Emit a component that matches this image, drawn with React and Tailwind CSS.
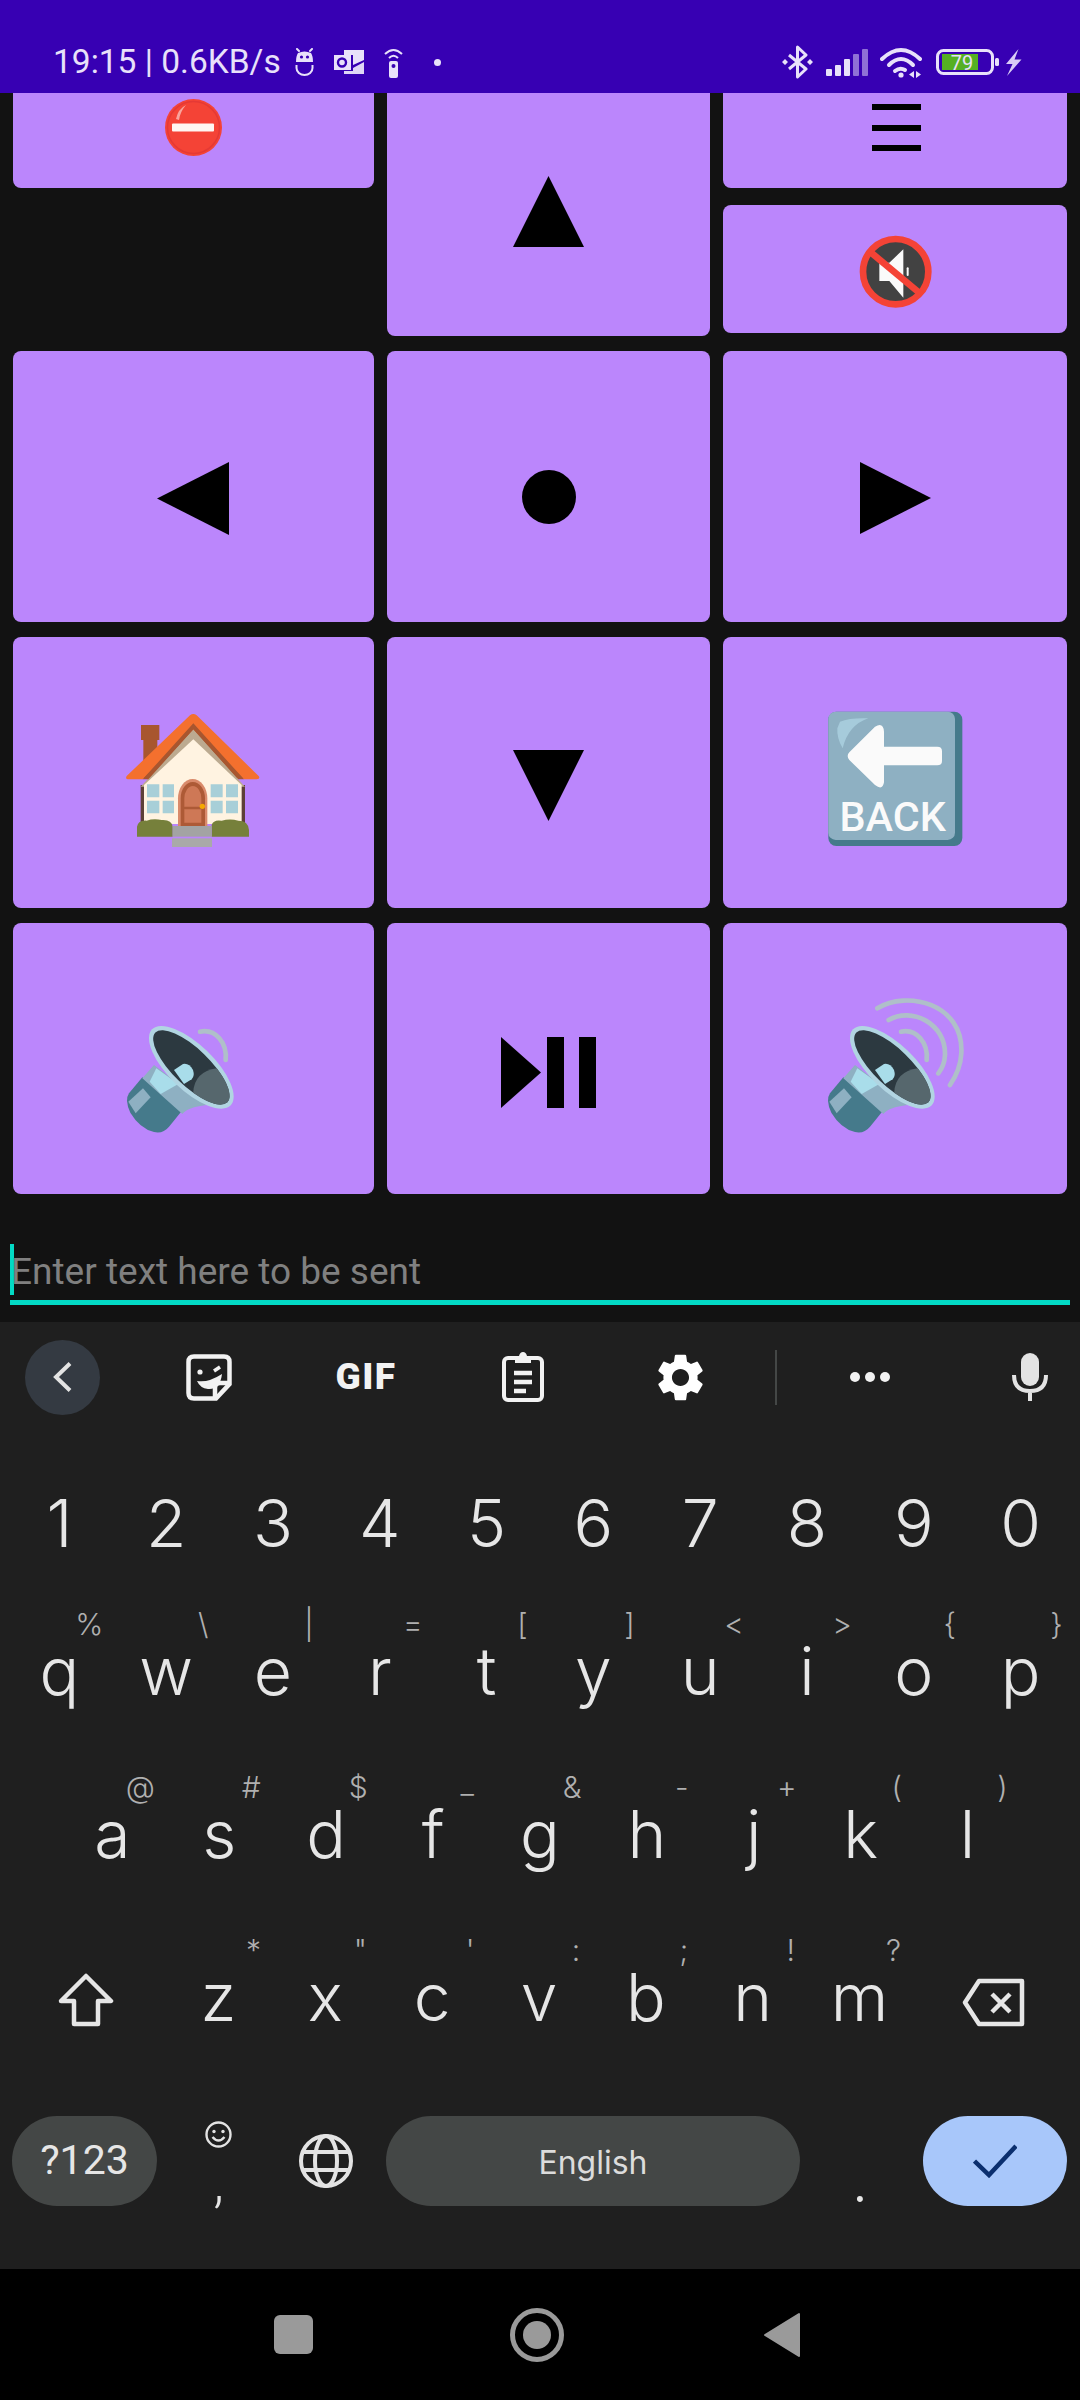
import React from 'react';

const BTN = 'flex items-center justify-center rounded-[8px] bg-[#bb86fc] overflow-hidden';
const INK = '#e8e1fa';

function Robot() {
  return (
    <svg width="19" height="28" viewBox="0 0 19 28" fill="none" stroke={INK} strokeWidth="2">
      <path d="M2 1l2 2M17 1l-2 2" strokeLinecap="round" />
      <path d="M3 5Q9.5 2 16 5Q18 8 18 14H1Q1 8 3 5Z" fill={INK} stroke="none" />
      <circle cx="6.5" cy="9" r="1.6" fill="#3700b3" stroke="none" />
      <circle cx="12.5" cy="9" r="1.6" fill="#3700b3" stroke="none" />
      <path d="M1.5 17v3a8 7 0 0 0 16 0v-3" />
    </svg>
  );
}
function Outlook() {
  return (
    <svg width="30" height="24" viewBox="0 0 30 24" fill={INK}>
      <path d="M10 0H30V10L19 15V5H10Z" />
      <path d="M19 18L30 12V24H10V21H19Z" opacity=".95" />
      <rect x="0" y="5" width="17" height="15" />
      <circle cx="8" cy="12.5" r="4" fill="none" stroke="#3700b3" strokeWidth="2.4" />
    </svg>
  );
}
function Remote() {
  return (
    <svg width="19" height="31" viewBox="0 0 19 31" fill="none" stroke={INK} strokeWidth="2">
      <path d="M1 7Q9.5 -1 18 7M5 11Q9.5 6.5 14 11" />
      <rect x="5" y="14" width="9" height="17" rx="2" fill={INK} stroke="none" />
      <circle cx="9.5" cy="19" r="2" fill="#3700b3" stroke="none" />
    </svg>
  );
}
function Bluetooth() {
  return (
    <svg width="31" height="34" viewBox="0 0 31 34" fill="none" stroke={INK} strokeWidth="3">
      <path d="M7 10L24 24L15.5 32V2L24 10L7 24" strokeLinejoin="round" />
      <path d="M3 14l3 3l-3 3l-3-3ZM28 14l3 3l-3 3l-3-3Z" fill={INK} stroke="none" />
    </svg>
  );
}
function Signal() {
  return (
    <svg width="42" height="27" viewBox="0 0 42 27" fill={INK}>
      <rect x="0" y="20" width="6" height="7" rx="1" />
      <rect x="9" y="16" width="6" height="11" rx="1" />
      <rect x="18" y="10" width="6" height="17" rx="1" />
      <rect x="27" y="5" width="6" height="22" rx="1" opacity=".5" />
      <rect x="36" y="0" width="6" height="27" rx="1" opacity=".5" />
    </svg>
  );
}
function Wifi() {
  return (
    <svg width="42" height="31" viewBox="0 0 42 31" fill="none" stroke={INK} strokeWidth="4" strokeLinecap="round">
      <path d="M2 12Q21 -6 40 12" />
      <path d="M9 18Q21 6 33 18" />
      <path d="M15 24Q20 20 25 23" />
      <circle cx="21" cy="28" r="2.6" fill={INK} stroke="none" />
      <path d="M34 24v7l-5-3.5ZM36 24v7l5-3.5Z" fill={INK} stroke="none" />
    </svg>
  );
}
function Battery() {
  return (
    <svg width="63" height="26" viewBox="0 0 63 26" fill="none">
      <rect x="1.5" y="1.5" width="55" height="23" rx="6" stroke={INK} strokeWidth="3" />
      <rect x="6" y="5" width="36" height="16" fill="#55b023" />
      <text x="26" y="20.5" textAnchor="middle" fill={INK} className="font-[Roboto,sans-serif] text-[20px]">79</text>
      <rect x="59" y="9" width="4" height="8" rx="1.5" fill={INK} />
    </svg>
  );
}
function Bolt() {
  return (
    <svg width="17" height="27" viewBox="0 0 17 27" fill="#d9cbf6">
      <path d="M13.5 0L1 15H7.5L2 27L16.5 10.5H9.5Z" />
    </svg>
  );
}

function StatusBar() {
  return (
    <div className="h-[93px] pt-[31px] shrink-0 bg-[#3700b3] flex items-center justify-between pl-[53px] pr-[58px] text-[#e8e1fa] font-[Roboto,sans-serif]">
      <div className="flex items-center">
        <span className="w-[242px] text-[33.5px] leading-[40px] whitespace-nowrap">19:15 | 0.6KB/s</span>
        <Robot />
        <span className="ml-[20px] flex"><Outlook /></span>
        <span className="ml-[20px] flex"><Remote /></span>
        <span className="ml-[31px] w-[7px] h-[7px] rounded-full bg-[#e8e1fa]" />
      </div>
      <div className="flex items-center">
        <Bluetooth />
        <span className="ml-[13px] flex"><Signal /></span>
        <span className="ml-[12px] flex"><Wifi /></span>
        <span className="ml-[14px] flex"><Battery /></span>
        <span className="ml-[6px] flex"><Bolt /></span>
      </div>
    </div>
  );
}

function NoEntry() {
  return (
    <svg width="57" height="57" viewBox="0 0 57 57">
      <circle cx="28.5" cy="28.5" r="28.5" fill="#f44336" />
      <circle cx="28.5" cy="28.5" r="26" fill="#f44336" stroke="#e53935" strokeWidth="1.5" />
      <path d="M11 20Q13 10 21 6Q15 13 14 21Z" fill="#f9a49c" />
      <rect x="7" y="24.5" width="42" height="8" rx="1" fill="#fff6f2" />
    </svg>
  );
}
function Hamburger() {
  return (
    <svg width="49" height="47" viewBox="0 0 49 47" fill="#000">
      <rect y="0" width="49" height="6" />
      <rect y="21" width="49" height="6" />
      <rect y="41" width="49" height="6" />
    </svg>
  );
}
function Mute() {
  return (
    <svg width="90" height="90" viewBox="0 0 270 270">
      <circle cx="137" cy="137" r="98" fill="#424242" stroke="#f44336" strokeWidth="20" />
      <path d="M88 110H118L160 70V215L118 165H88Z" fill="#fafafa" />
      <rect x="170" y="124" width="6" height="26" rx="3" fill="#fafafa" />
      <path d="M66 82L205 198" stroke="#f44336" strokeWidth="20" />
    </svg>
  );
}
function House() {
  return (
    <svg width="207" height="180" viewBox="0 0 621 540">
      <rect x="153" y="105" width="55" height="45" fill="#a8562f" />
      <rect x="160" y="150" width="42" height="70" fill="#a8562f" />
      <rect x="152" y="285" width="313" height="115" fill="#5d4037" />
      <path d="M310 100L468 265H150Z" fill="#a8562f" />
      <path d="M310 118L465 290H152Z" fill="#bcaa90" />
      <path d="M310 148L455 285V402H162V285Z" fill="#fff3e1" />
      <path d="M300 76Q310 68 320 76L506 258Q512 268 500 268H462L310 118L158 268H118Q104 268 110 258Z" fill="#f4702e" />
      <path d="M310 100L462 268H445L310 118L175 268H158Z" fill="#a8562f" />
      <path d="M171 283H208V322H171ZM218 283H252V322H218ZM171 332H208V370H171ZM218 332H252V370H218ZM362 283H398V322H362ZM408 283H444V322H408ZM362 332H398V370H362ZM408 332H444V370H408Z" fill="#a8cfd8" />
      <path d="M264 408V325A44 58 0 0 1 352 325V408Z" fill="#d98a6b" />
      <path d="M272 408V325A36 48 0 0 1 345 325V408Z" fill="#ad5a36" />
      <path d="M283 350V325A25 36 0 0 1 334 325V350ZM283 358H334V398H283Z" fill="#ce7856" />
      <circle cx="337" cy="349" r="8" fill="#f5a800" />
      <path d="M141 440V410Q145 390 170 392Q190 385 215 390Q245 388 248 410V440ZM365 440V405Q370 388 395 392Q420 385 445 392Q475 392 477 420V440Z" fill="#76803b" />
      <rect x="248" y="408" width="117" height="32" fill="#a3a3a3" />
      <rect x="246" y="445" width="120" height="26" fill="#a9a9a9" />
    </svg>
  );
}
function BackKey() {
  return (
    <svg width="150" height="150" viewBox="0 0 450 450">
      <rect x="25" y="20" width="402" height="403" rx="24" fill="#457a8b" />
      <rect x="25" y="20" width="380" height="385" rx="22" fill="#8eb0c2" />
      <path d="M60 50Q90 38 145 40Q85 60 68 130Q50 100 52 70Z" fill="#a6cbdb" />
      <path d="M88 142L165 65Q190 50 192 80V125H352Q366 125 366 138V168Q366 181 352 181H192V232Q188 258 165 240L88 165Q78 153 88 142Z" fill="#fafafa" />
      <text x="218" y="378" textAnchor="middle" fill="#fafafa" className="font-[Roboto,sans-serif] text-[124px] font-medium">BACK</text>
    </svg>
  );
}
function Speaker({ loud }) {
  return (
    <svg width="150" height="150" viewBox="0 0 450 450" fill="none">
      <path d="M70 262L30 310Q16 330 34 368Q62 415 105 426Q132 432 150 410L195 355Z" fill="#457a8b" />
      <path d="M72 295L28 335L50 370L95 322Z" fill="#8eb0c2" />
      <path d="M105 225L70 265L190 372Q205 352 262 345Z" fill="#8eb0c2" />
      <path d="M112 235L92 275L125 312L178 282Z" fill="#a9ddea" />
      <g transform="rotate(44 217 232)">
        <ellipse cx="217" cy="232" rx="164" ry="68" fill="#b1d5e2" />
        <ellipse cx="217" cy="232" rx="150" ry="55" fill="#2c3940" />
        <path d="M274 181A150 55 0 0 1 274 283Q232 235 274 181Z" fill="#56676d" />
      </g>
      <path d="M165 240L192 222Q210 218 222 240Q228 258 218 268L195 282Z" fill="#a9ddea" />
      <g stroke="#afbfc9" strokeWidth="14" strokeLinecap="round">
        <path d="M243 125C290 115 325 160 320 210" />
        {loud && <path d="M206 90C275 50 378 100 375 195C374 215 367 235 355 250" />}
        {loud && <path d="M172 55C260 0 432 40 424 190C422 230 407 260 390 285" />}
      </g>
    </svg>
  );
}

function Tri({ pts, w, h, box }) {
  return (
    <svg width={w} height={h} viewBox={box}>
      <polygon points={pts} fill="#000" />
    </svg>
  );
}

function ButtonGrid() {
  return (
    <div className="h-[1101px] shrink-0 px-[13px] flex flex-col gap-[15px]">
      <div className="grid grid-cols-[361px_323px_344px] gap-x-[13px] h-[243px]">
        <div className={`${BTN} h-[95px] pb-[26px] rounded-t-none`}><NoEntry /></div>
        <div className={`${BTN} pb-[6px] rounded-t-none`}><Tri w={71} h={71} box="0 0 71 71" pts="35.5,0 71,71 0,71" /></div>
        <div className="flex flex-col gap-[17px]">
          <div className={`${BTN} h-[95px] pb-[26px] pl-[3px] rounded-t-none`}><Hamburger /></div>
          <div className={`${BTN} h-[128px] pt-[4px]`}><Mute /></div>
        </div>
      </div>
      <div className="grid grid-cols-[361px_323px_344px] gap-x-[13px] h-[271px]">
        <div className={`${BTN} pt-[23px] pr-[1px]`}><Tri w={72} h={73} box="0 0 72 73" pts="72,0 72,73 0,36.5" /></div>
        <div className={`${BTN} pt-[21px]`}><svg width="54" height="54" viewBox="0 0 54 54"><circle cx="27" cy="27" r="27" fill="#000" /></svg></div>
        <div className={`${BTN} pt-[23px]`}><Tri w={71} h={72} box="0 0 71 72" pts="0,0 71,36 0,72" /></div>
      </div>
      <div className="grid grid-cols-[361px_323px_344px] gap-x-[13px] h-[271px]">
        <div className={`${BTN} pt-[15px]`}><House /></div>
        <div className={`${BTN} pt-[26px]`}><Tri w={71} h={71} box="0 0 71 71" pts="0,0 71,0 35.5,71" /></div>
        <div className={`${BTN} pt-[15px]`}><BackKey /></div>
      </div>
      <div className="grid grid-cols-[361px_323px_344px] gap-x-[13px] h-[271px]">
        <div className={`${BTN} pt-[13px]`}><Speaker /></div>
        <div className={`${BTN} pt-[28px]`}>
          <svg width="95" height="71" viewBox="0 0 95 71" fill="#000">
            <polygon points="0,0 40,35.5 0,71" />
            <rect x="46" width="17" height="71" />
            <rect x="78" width="17" height="71" />
          </svg>
        </div>
        <div className={`${BTN} pt-[13px]`}><Speaker loud /></div>
      </div>
    </div>
  );
}

function InputField() {
  return (
    <div className="h-[128px] shrink-0 px-[10px] pt-[50px]">
      <div className="flex h-[51px]">
        <div className="w-[4px] h-full bg-[#03dac5]" />
        <span className="-ml-[3px] pt-[6px] text-[37px] leading-[44px] text-[#808080] font-[Roboto,sans-serif] whitespace-nowrap">Enter text here to be sent</span>
      </div>
      <div className="mt-[5px] h-[5px] bg-[#03dac5]" />
    </div>
  );
}

function Sticker() {
  return (
    <svg width="46" height="47" viewBox="0 0 46 47" fill="none" stroke="#f2f2f2" strokeWidth="4.5">
      <path d="M8 2.5H38Q43.5 2.5 43.5 8V30L30 44.5H8Q2.5 44.5 2.5 39V8Q2.5 2.5 8 2.5Z" />
      <path d="M43.5 29H34Q29 29 29 34V44.5" />
      <circle cx="14" cy="18" r="2.6" fill="#f2f2f2" stroke="none" />
      <path d="M28 17L34 13" strokeWidth="3.5" />
      <path d="M11 27Q22 29 36 20Q34 36 22 35Q14 34 11 27Z" fill="#f2f2f2" stroke="none" />
    </svg>
  );
}
function Clipboard() {
  return (
    <svg width="42" height="50" viewBox="0 0 42 50" fill="none" stroke="#f2f2f2" strokeWidth="4">
      <rect x="2" y="6" width="38" height="42" rx="4" />
      <path d="M13 4H17Q18 0 21 0Q24 0 25 4H29V11H13Z" fill="#f2f2f2" stroke="none" />
      <path d="M12 21H30M12 30H30M12 39H24" strokeWidth="4.5" />
    </svg>
  );
}
function Gear() {
  return (
    <svg width="57" height="57" viewBox="0 0 24 24" fill="#fff">
      <path d="M19.14 12.94c.04-.3.06-.61.06-.94 0-.32-.02-.64-.07-.94l2.03-1.58c.18-.14.23-.41.12-.61l-1.92-3.32c-.12-.22-.37-.29-.59-.22l-2.39.96c-.5-.38-1.03-.7-1.62-.94l-.36-2.54c-.04-.24-.24-.41-.48-.41h-3.84c-.24 0-.43.17-.47.41l-.36 2.54c-.59.24-1.13.57-1.62.94l-2.39-.96c-.22-.08-.47 0-.59.22L2.74 8.87c-.12.21-.08.47.12.61l2.03 1.58c-.05.3-.09.63-.09.94s.02.64.07.94l-2.03 1.58c-.18.14-.23.41-.12.61l1.92 3.32c.12.22.37.29.59.22l2.39-.96c.5.38 1.03.7 1.62.94l.36 2.54c.05.24.24.41.48.41h3.84c.24 0 .44-.17.47-.41l.36-2.54c.59-.24 1.13-.56 1.62-.94l2.39.96c.22.08.47 0 .59-.22l1.92-3.32c.12-.22.07-.47-.12-.61l-2.01-1.58zM12 15.6c-1.98 0-3.6-1.62-3.6-3.6s1.62-3.6 3.6-3.6 3.6 1.62 3.6 3.6-1.62 3.6-3.6 3.6z" />
    </svg>
  );
}
function Mic() {
  return (
    <svg width="36" height="48" viewBox="0 0 36 48" fill="none" stroke="#e3e3e3" strokeWidth="4">
      <rect x="9" y="0" width="18" height="33" rx="9" fill="#e3e3e3" stroke="none" />
      <path d="M2 22Q2 38 18 38Q34 38 34 22M18 38V48" />
    </svg>
  );
}

function Toolbar() {
  return (
    <div className="h-[110px] mb-[15px] flex items-center">
      <div className="ml-[25px] w-[75px] h-[75px] rounded-full bg-[#343a42] flex items-center justify-center">
        <svg width="20" height="30" viewBox="0 0 20 30" fill="none" stroke="#e3e3e3" strokeWidth="4"><path d="M17 1.5L3 15L17 28.5" /></svg>
      </div>
      <div className="ml-[30.5px] w-[157px] flex justify-center"><Sticker /></div>
      <div className="w-[157px] flex justify-center"><span className="text-[37px] leading-[40px] font-black text-[#f2f2f2] font-[Roboto,sans-serif] tracking-[1.5px]">GIF</span></div>
      <div className="w-[157px] flex justify-center"><Clipboard /></div>
      <div className="w-[157px] flex justify-center"><Gear /></div>
      <div className="ml-[16px] w-[2px] h-[55px] bg-[#444746]" />
      <div className="ml-[13.5px] w-[160px] flex justify-center gap-[5px]">
        <span className="w-[10px] h-[10px] rounded-full bg-[#f2f2f2]" />
        <span className="w-[10px] h-[10px] rounded-full bg-[#f2f2f2]" />
        <span className="w-[10px] h-[10px] rounded-full bg-[#f2f2f2]" />
      </div>
      <div className="ml-[30px] w-[100px] flex justify-center"><Mic /></div>
    </div>
  );
}

function Key({ c, hint, hc = 'ml-[36px]', ht = 'top-[14px]' }) {
  return (
    <div className="relative flex-1 text-center pt-[43px] text-[66px] leading-[66px] font-light text-[#e6e6e6]">
      {c}
      {hint && (
        <span className={`absolute left-1/2 ${ht} -translate-x-1/2 ${hc} text-[30px] leading-[30px] font-light text-[#b0b0b0]`}>{hint}</span>
      )}
    </div>
  );
}

const DIGITS = ['1', '2', '3', '4', '5', '6', '7', '8', '9', '0'];
const ROW1 = [
  ['q', '%', 'ml-[30px]'], ['w', '\\', 'ml-[37px]'], ['e', '|', 'ml-[36px]'], ['r', '=', 'ml-[33px]'], ['t', '[', 'ml-[36px]'],
  ['y', ']', 'ml-[36px]'], ['u', '<', 'ml-[34px]'], ['i', '>', 'ml-[35px]'], ['o', '{', 'ml-[36px]'], ['p', '}', 'ml-[36px]'],
];
const ROW2 = [
  ['a', '@', 'ml-[28px]'], ['s', '#', 'ml-[32px]'], ['d', '$', 'ml-[32px]'], ['f', '_', 'ml-[34px]', 'top-[10px]'], ['g', '&', 'ml-[32px]'],
  ['h', '-', 'ml-[35px]'], ['j', '+', 'ml-[33px]'], ['k', '(', 'ml-[36px]'], ['l', ')', 'ml-[35px]'],
];
const ROW3 = [
  ['z', '*', 'ml-[35px]'], ['x', '"', 'ml-[35px]'], ['c', "'", 'ml-[38px]'], ['v', ':', 'ml-[37px]'], ['b', ';', 'ml-[38px]'],
  ['n', '!', 'ml-[38px]'], ['m', '?', 'ml-[34px]'],
];

function Keyboard() {
  return (
    <div className="h-[947px] shrink-0 bg-[#1f1f1f] font-[Inter,sans-serif]">
      <Toolbar />
      <div className="h-[148px] px-[6px] flex">
        {DIGITS.map((d) => <Key key={d} c={d} />)}
      </div>
      <div className="h-[163px] px-[6px] flex">
        {ROW1.map(([c, h, m]) => <Key key={c} c={c} hint={h} hc={m} />)}
      </div>
      <div className="h-[163px] px-[59px] flex">
        {ROW2.map(([c, h, m, t]) => <Key key={c} c={c} hint={h} hc={m} ht={t} />)}
      </div>
      <div className="h-[163px] px-[6px] flex">
        <div className="w-[159px] flex justify-center pt-[52px]">
          <svg width="56" height="54" viewBox="0 0 56 54" fill="none" stroke="#e6e6e6" strokeWidth="4.5" strokeLinejoin="round">
            <path d="M28 3L53 28H40V51H16V28H3Z" />
          </svg>
        </div>
        <div className="flex-1 flex">
          {ROW3.map(([c, h, m]) => <Key key={c} c={c} hint={h} hc={m} />)}
        </div>
        <div className="w-[161px] flex justify-center pt-[57px]">
          <svg width="63" height="49" viewBox="0 0 63 49" fill="none" stroke="#e6e6e6" strokeWidth="4.5" strokeLinejoin="round">
            <path d="M17 3H60V46H17L3 24.5Z" />
            <path d="M30 16L48 34M48 16L30 34" />
          </svg>
        </div>
      </div>
      <div className="mt-[32px] ml-[12px] h-[90px] flex">
        <div className="w-[145px] rounded-full bg-[#444746] flex items-center justify-center text-[41px] text-[#e6e6e6] font-[Roboto,sans-serif]">?123</div>
        <div className="ml-[8px] w-[107px] relative flex justify-center pt-[5px]">
          <svg width="27" height="27" viewBox="0 0 27 27" fill="none" stroke="#e3e3e3" strokeWidth="2.4">
            <circle cx="13.5" cy="13.5" r="12" />
            <circle cx="9" cy="10.5" r="1.7" fill="#e3e3e3" stroke="none" />
            <circle cx="18" cy="10.5" r="1.7" fill="#e3e3e3" stroke="none" />
            <path d="M7.5 16Q13.5 23 19.5 16" />
          </svg>
          <span className="absolute left-1/2 -translate-x-1/2 top-[36px] text-[56px] leading-[60px] text-[#e6e6e6] font-[Roboto,sans-serif] font-light">,</span>
        </div>
        <div className="w-[107px] flex items-center justify-center">
          <svg width="54" height="54" viewBox="0 0 54 54" fill="none" stroke="#e3e3e3" strokeWidth="4">
            <circle cx="27" cy="27" r="25" />
            <ellipse cx="27" cy="27" rx="11" ry="25" />
            <path d="M5 18H49M5 36H49" />
          </svg>
        </div>
        <div className="ml-[7px] w-[414px] rounded-full bg-[#444746] flex items-center justify-center pt-[3px] text-[32px] text-[#dcdcdc] font-[Inter,sans-serif]">English</div>
        <div className="ml-[7px] w-[106px] relative">
          <span className="absolute left-0 right-0 text-center top-[36px] text-[56px] leading-[60px] text-[#e6e6e6] font-light">.</span>
        </div>
        <div className="ml-[10px] w-[144px] rounded-full bg-[#a8c7fa] flex items-center justify-center">
          <svg width="44" height="34" viewBox="0 0 44 34" fill="none" stroke="#0b2f6e" strokeWidth="4.5"><path d="M1.5 17L16 31L43 2" /></svg>
        </div>
      </div>
    </div>
  );
}

function NavBar() {
  return (
    <div className="h-[131px] shrink-0 bg-black flex items-center">
      <div className="ml-[274px] w-[39px] h-[39px] rounded-[6px] bg-[#9a9a9a]" />
      <div className="ml-[197px]">
        <svg width="54" height="54" viewBox="0 0 54 54">
          <circle cx="27" cy="27" r="24.5" fill="none" stroke="#9a9a9a" strokeWidth="5" />
          <circle cx="27" cy="27" r="14" fill="#9a9a9a" />
        </svg>
      </div>
      <div className="ml-[199px]">
        <svg width="37" height="46" viewBox="0 0 37 46"><path d="M36 2V44L2 23Z" fill="#9a9a9a" stroke="#9a9a9a" strokeWidth="2" strokeLinejoin="round" /></svg>
      </div>
    </div>
  );
}

export default function App() {
  return (
    <div className="w-[1080px] h-[2400px] overflow-hidden flex flex-col bg-[#121212]">
      <StatusBar />
      <ButtonGrid />
      <InputField />
      <Keyboard />
      <NavBar />
    </div>
  );
}
